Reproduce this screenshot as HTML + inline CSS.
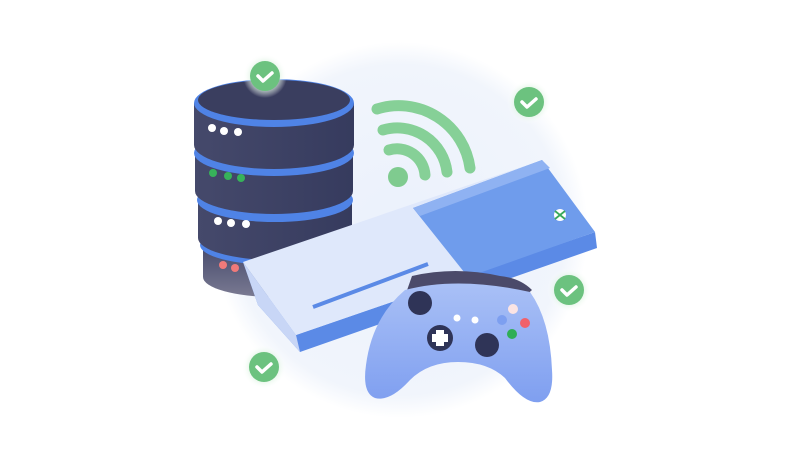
<!DOCTYPE html>
<html><head><meta charset="utf-8"><style>html,body{margin:0;padding:0;background:#fff;width:800px;height:451px;overflow:hidden}</style></head>
<body>
<svg width="800" height="451" viewBox="0 0 800 451" xmlns="http://www.w3.org/2000/svg">
<defs>
<radialGradient id="bg" cx="50%" cy="50%" r="50%"><stop offset="0" stop-color="#ebf1fc"/><stop offset="0.88" stop-color="#f1f5fc"/><stop offset="1" stop-color="#fff"/></radialGradient>
<radialGradient id="glow"><stop offset="0.5" stop-color="#cfeed5"/><stop offset="1" stop-color="#fff" stop-opacity="0"/></radialGradient>
<linearGradient id="ctl" x1="0" y1="0" x2="0" y2="1"><stop offset="0" stop-color="#a9c0f6"/><stop offset="1" stop-color="#7f9ff0"/></linearGradient>
<linearGradient id="tier" x1="0" y1="0" x2="1" y2="0"><stop offset="0" stop-color="#45496b"/><stop offset="1" stop-color="#363b5e"/></linearGradient>
<linearGradient id="tier4" x1="0" y1="0" x2="0" y2="1"><stop offset="0" stop-color="#45496b"/><stop offset="1" stop-color="#7a7a92"/></linearGradient>
</defs>
<circle cx="400" cy="230" r="188" fill="url(#bg)"/>
<g>
 <path d="M203 245 v32 a72 20 0 0 0 144 0 v-32 z" fill="url(#tier4)"/>
 <ellipse cx="275" cy="245" rx="75" ry="20" fill="#4f83e6"/>
 <path d="M198 200 v38 a77 22 0 0 0 154 0 v-38 z" fill="url(#tier)"/>
 <ellipse cx="275" cy="200" rx="78" ry="22" fill="#4f83e6"/>
 <path d="M195 153 v38 a79 23 0 0 0 158 0 v-38 z" fill="url(#tier)"/>
 <ellipse cx="274" cy="153" rx="80" ry="23" fill="#4f83e6"/>
 <path d="M194 103 v42 a80 24 0 0 0 160 0 v-42 z" fill="url(#tier)"/>
 <ellipse cx="274" cy="103" rx="80" ry="24" fill="#4f83e6"/>
 <ellipse cx="274" cy="100" rx="76" ry="20" fill="#3a3e5f"/>
 <g fill="#fff"><circle cx="212" cy="128" r="4"/><circle cx="224" cy="131" r="4"/><circle cx="238" cy="132" r="4"/>
 <circle cx="218" cy="221" r="4"/><circle cx="231" cy="223" r="4"/><circle cx="246" cy="224" r="4"/></g>
 <g fill="#37b25a"><circle cx="213" cy="173" r="4"/><circle cx="228" cy="176" r="4"/><circle cx="241" cy="178" r="4"/></g>
 <g fill="#f07a7a"><circle cx="223" cy="265" r="4"/><circle cx="235" cy="268" r="4"/></g>
</g>
<g fill="none" stroke="#86d097" stroke-width="11" stroke-linecap="round">
 <path d="M377 109 A72 72 0 0 1 470 168"/>
 <path d="M383 130 A50 50 0 0 1 447 172"/>
 <path d="M389 150 A28 28 0 0 1 425 175"/>
</g>
<circle cx="398" cy="177" r="10" fill="#7fcb8f"/>
<path d="M243 262 L258 305 L300 352 L597 248 L595 232 L296 335 Z" fill="#5b8ae6"/>
<path d="M243 262 L542 160 L595 232 L296 335 Z" fill="#dfe8fb"/>
<path d="M243 262 L296 335 L300 352 L258 305 Z" fill="#c8d6f6"/>
<path d="M413 208 L542 160 L595 232 L468 277 Z" fill="#6f9cec"/>
<path d="M413 208 L542 160 L550 168 L420 216 Z" fill="#8fb2f2"/>
<line x1="313" y1="307" x2="428" y2="264" stroke="#5b8ae6" stroke-width="4"/>
<circle cx="560" cy="215" r="6" fill="#fff"/>
<path d="M555 211 L565 219 M565 211 L555 219" stroke="#3aa85a" stroke-width="1.8"/>
<path d="M412 276 Q455 266 500 276 Q520 278 532 290 L523 298 Q460 282 405 296 Z" fill="#4b4a6a"/>
<path d="M405 290 Q458 276 530 292 Q550 320 552 370 Q554 398 540 402 Q525 405 505 378 Q488 362 458 362 Q428 362 410 380 Q390 402 375 398 Q362 393 366 365 Q372 318 405 290 Z" fill="url(#ctl)"/>
<circle cx="420" cy="303" r="12" fill="#2f3457"/>
<circle cx="440" cy="338" r="13" fill="#2f3457"/>
<path d="M436 330 h8 v4 h4 v8 h-4 v4 h-8 v-4 h-4 v-8 h4 z" fill="#fff"/>
<circle cx="487" cy="345" r="12" fill="#2f3457"/>
<circle cx="457" cy="318" r="3.5" fill="#fff"/><circle cx="475" cy="320" r="3.5" fill="#fff"/>
<circle cx="502" cy="320" r="5" fill="#7d9ff0"/><circle cx="513" cy="309" r="5" fill="#fbe4e4"/>
<circle cx="525" cy="323" r="5" fill="#f0616a"/><circle cx="512" cy="334" r="5" fill="#2fae55"/>
<g>
 <circle cx="265" cy="76" r="22" fill="url(#glow)"/><circle cx="265" cy="76" r="15" fill="#6cc27f"/>
 <circle cx="529" cy="102" r="22" fill="url(#glow)"/><circle cx="529" cy="102" r="15" fill="#6cc27f"/>
 <circle cx="569" cy="290" r="22" fill="url(#glow)"/><circle cx="569" cy="290" r="15" fill="#6cc27f"/>
 <circle cx="264" cy="367" r="22" fill="url(#glow)"/><circle cx="264" cy="367" r="15" fill="#6cc27f"/>
 <g fill="none" stroke="#fff" stroke-width="3.5" stroke-linecap="round" stroke-linejoin="round">
  <path d="M258 76 l5 5 l9 -8"/><path d="M522 102 l5 5 l9 -8"/><path d="M562 290 l5 5 l9 -8"/><path d="M257 367 l5 5 l9 -8"/>
 </g>
</g>
</svg>
</body></html>
